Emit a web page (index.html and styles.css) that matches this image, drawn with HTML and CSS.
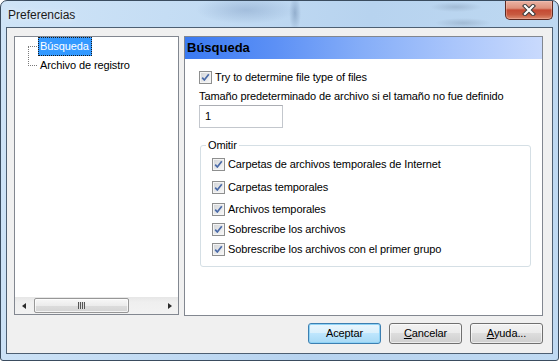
FILE: index.html
```html
<!DOCTYPE html>
<html lang="es">
<head>
<meta charset="utf-8">
<title>Preferencias</title>
<link rel="stylesheet" href="styles.css">
</head>
<body>
<svg class="defs" width="0" height="0" aria-hidden="true">
  <defs>
    <linearGradient id="cbfill" x1="0" y1="0" x2="1" y2="1">
      <stop offset="0" stop-color="#d4d6d9"/>
      <stop offset="1" stop-color="#f6f6f6"/>
    </linearGradient>
    <symbol id="cb" viewBox="0 0 13 13">
      <rect x="0.5" y="0.5" width="12" height="12" fill="#f4f4f4" stroke="#8e8f8f"/>
      <rect x="2" y="2" width="9" height="9" fill="url(#cbfill)"/>
      <path d="M3.2 6.6 L5.3 9 L9.8 3.3" fill="none" stroke="#4a6aa8" stroke-width="1.7" stroke-linejoin="round"/>
    </symbol>
  </defs>
</svg>
<div class="window">
  <div class="titlebar">
    <span class="title">Preferencias</span>
    <div class="close">
      <svg width="14" height="12" viewBox="0 0 14 12">
        <path d="M3 2 L11 10 M11 2 L3 10" stroke="#3a3a3a" stroke-width="4.2" stroke-linecap="square"/>
        <path d="M3 2 L11 10 M11 2 L3 10" stroke="#ffffff" stroke-width="2.2" stroke-linecap="square"/>
      </svg>
    </div>
  </div>
  <div class="client">
    <div class="main">
      <div class="tree">
        <div class="tree-body">
          <svg class="tree-lines" width="23" height="38" viewBox="0 0 23 38">
            <path d="M13.5 10 V29 M13 9.5 H23 M13 28.5 H24" stroke="#7a7a7a" stroke-width="1" stroke-dasharray="1 1" fill="none"/>
          </svg>
          <div class="tree-items">
            <div class="item selected">Búsqueda</div>
            <div class="item">Archivo de registro</div>
          </div>
        </div>
        <div class="hscroll">
          <div class="arrow"><span class="tri-left"></span></div>
          <div class="track">
            <div class="thumb"><span class="grip"></span></div>
          </div>
          <div class="arrow"><span class="tri-right"></span></div>
        </div>
      </div>
      <div class="panel">
        <div class="panel-header">Búsqueda</div>
        <div class="panel-body">
          <div class="check"><svg class="cbox"><use href="#cb"/></svg><span>Try to determine file type of files</span></div>
          <div class="label">Tamaño predeterminado de archivo si el tamaño no fue definido</div>
          <div class="input">1</div>
          <fieldset class="group">
            <legend>Omitir</legend>
            <div class="check"><svg class="cbox"><use href="#cb"/></svg><span>Carpetas de archivos temporales de Internet</span></div>
            <div class="check"><svg class="cbox"><use href="#cb"/></svg><span>Carpetas temporales</span></div>
            <div class="check"><svg class="cbox"><use href="#cb"/></svg><span>Archivos temporales</span></div>
            <div class="check"><svg class="cbox"><use href="#cb"/></svg><span>Sobrescribe los archivos</span></div>
            <div class="check"><svg class="cbox"><use href="#cb"/></svg><span>Sobrescribe los archivos con el primer grupo</span></div>
          </fieldset>
        </div>
      </div>
    </div>
    <div class="buttons">
      <div class="btn default">Aceptar</div>
      <div class="btn"><u>C</u>ancelar</div>
      <div class="btn"><u>A</u>yuda...</div>
    </div>
  </div>
</div>
</body>
</html>
```
FILE: styles.css
```css
* { box-sizing: border-box; }
html, body { margin: 0; padding: 0; }
body {
  width: 559px;
  height: 361px;
  overflow: hidden;
  background: #fff;
  font-family: "Liberation Sans", Arial, sans-serif;
  font-size: 11px;
  letter-spacing: -0.1px;
  color: #000;
}
.defs { position: absolute; width: 0; height: 0; }

.window {
  width: 559px;
  height: 361px;
  display: flex;
  flex-direction: column;
  border: 1px solid #3a4c5f;
  border-radius: 7px 7px 3px 3px;
  padding: 0 5px 6px 5px;
  background:
    radial-gradient(ellipse 50px 14px at 245px 9px, rgba(95,125,170,0.3), rgba(95,125,170,0)),
    radial-gradient(ellipse 6px 18px at 294px 12px, rgba(70,100,140,0.35), rgba(70,100,140,0)),
    radial-gradient(ellipse 26px 5px at 455px 6px, rgba(105,125,150,0.3), rgba(105,125,150,0)),
    radial-gradient(ellipse 28px 5px at 462px 22px, rgba(105,125,150,0.3), rgba(105,125,150,0)),
    linear-gradient(100deg, #cfe4f7 0%, #c2dbf3 35%, #b7d3ef 60%, #c0daf2 100%);
}

.titlebar {
  height: 26px;
  display: flex;
  justify-content: space-between;
  align-items: flex-start;
  flex-shrink: 0;
}
.title {
  font-family: "Liberation Sans", Arial, sans-serif;
  font-size: 12px;
  letter-spacing: 0;
  line-height: 14px;
  padding: 7px 0 0 2px;
  color: #1a1a1a;
  text-shadow: 0 0 6px rgba(255,255,255,0.9);
}
.close {
  width: 48px;
  height: 19px;
  display: flex;
  align-items: center;
  justify-content: center;
  border: 1px solid #5c2a22;
  border-top: none;
  border-radius: 0 0 5px 5px;
  background: linear-gradient(#eab3a4 0%, #de917c 40%, #c54a33 50%, #c85a40 75%, #dc8a6e 100%);
  box-shadow: inset 0 0 0 1px rgba(255,210,200,0.35);
}

.client {
  flex: 1;
  display: flex;
  flex-direction: column;
  gap: 7px;
  border: 1px solid #4d5f72;
  background: #f0f0f0;
  padding: 8px 9px 9px 7px;
}
.main {
  flex: 1;
  display: flex;
  gap: 5px;
}

/* tree */
.tree {
  width: 165px;
  height: 279px;
  border: 1px solid #828790;
  background: #fff;
  display: flex;
  flex-direction: column;
}
.tree-body {
  flex: 1;
  display: flex;
  align-items: flex-start;
}
.tree-lines { flex-shrink: 0; display: block; }
.tree-items { display: flex; flex-direction: column; }
.item {
  height: 19px;
  line-height: 17px;
  padding: 0 2px 0 1px;
  border: 1px solid transparent;
  white-space: nowrap;
  align-self: flex-start;
}
.item.selected {
  background: #3399ff;
  color: #fff;
  border: 1px dotted #1a1a1a;
}
.hscroll {
  height: 17px;
  display: flex;
  background: linear-gradient(#e6e6e6, #efefef 30%, #f2f2f2);
}
.arrow {
  width: 17px;
  display: flex;
  align-items: center;
  justify-content: center;
}
.tri-left {
  width: 0; height: 0;
  border-top: 3.5px solid transparent;
  border-bottom: 3.5px solid transparent;
  border-right: 4px solid #2b2b2b;
}
.tri-right {
  width: 0; height: 0;
  border-top: 3.5px solid transparent;
  border-bottom: 3.5px solid transparent;
  border-left: 4px solid #2b2b2b;
}
.track { flex: 1; padding: 1px 0 1px 2px; }
.thumb {
  width: 95px;
  height: 15px;
  border: 1px solid #979797;
  border-radius: 2px;
  background: linear-gradient(#f7f7f7 0%, #ececec 50%, #dcdcdc 51%, #d4d4d4 100%);
  box-shadow: inset 0 0 0 1px rgba(255,255,255,0.7);
  display: flex;
  align-items: center;
  justify-content: center;
}
.grip {
  width: 7px;
  height: 7px;
  background: repeating-linear-gradient(90deg, #555 0 1px, #ddd 1px 2px);
}

/* panel */
.panel {
  flex: 1;
  border: 1px solid #828790;
  background: #fff;
  display: flex;
  flex-direction: column;
}
.panel-header {
  height: 22px;
  line-height: 22px;
  padding-left: 2px;
  font-size: 13px;
  font-weight: bold;
  letter-spacing: 0;
  color: #000;
  background: linear-gradient(90deg, #3a7af2 0%, #5c90f5 25%, #86aef8 50%, #a9c5fb 75%, #c9dafd 100%);
}
.panel-body {
  padding: 12px 11px 0 14px;
  display: flex;
  flex-direction: column;
  align-items: flex-start;
}
.check {
  display: flex;
  align-items: center;
  gap: 3px;
  height: 13px;
  line-height: 13px;
  white-space: nowrap;
}
.cbox { width: 13px; height: 13px; flex-shrink: 0; display: block; }
.label {
  margin-top: 6px;
  line-height: 13px;
  white-space: nowrap;
}
.input {
  margin-top: 2px;
  width: 84px;
  height: 23px;
  border: 1px solid #c3c7cd;
  border-top-color: #abadb3;
  padding-left: 5px;
  line-height: 21px;
}
.group {
  margin: 11px 0 0 1px;
  width: 331px;
  align-self: flex-start;
  border: 1px solid #d5dfe5;
  border-radius: 3px;
  padding: 0 0 10px 0;
  min-width: 0;
}
.group legend {
  margin-left: 5px;
  padding: 0 2px;
  line-height: 13px;
}
.group .check { margin-left: 11px; }
.group .check:nth-of-type(1) { margin-top: 6px; }
.group .check:nth-of-type(2) { margin-top: 10px; }
.group .check:nth-of-type(3) { margin-top: 9px; }
.group .check:nth-of-type(4) { margin-top: 7px; }
.group .check:nth-of-type(5) { margin-top: 7px; }

/* buttons */
.buttons {
  height: 21px;
  display: flex;
  justify-content: flex-end;
  gap: 8px;
  flex-shrink: 0;
}
.btn {
  width: 73px;
  height: 21px;
  border: 1px solid #707070;
  border-radius: 3px;
  background: linear-gradient(#f2f2f2 0%, #ebebeb 49%, #dddddd 50%, #cfcfcf 100%);
  box-shadow: inset 0 0 0 1px rgba(255,255,255,0.6);
  display: flex;
  align-items: center;
  justify-content: center;
  line-height: 13px;
}
.btn.default {
  border-color: #3c7fb1;
  background: linear-gradient(#eaf6fd 0%, #d9f0fc 49%, #bee6fd 50%, #a7d9f5 100%);
  box-shadow: inset 0 0 0 1px #8fd3f6;
}
.btn u { text-decoration: underline; text-underline-offset: 1px; }
```
